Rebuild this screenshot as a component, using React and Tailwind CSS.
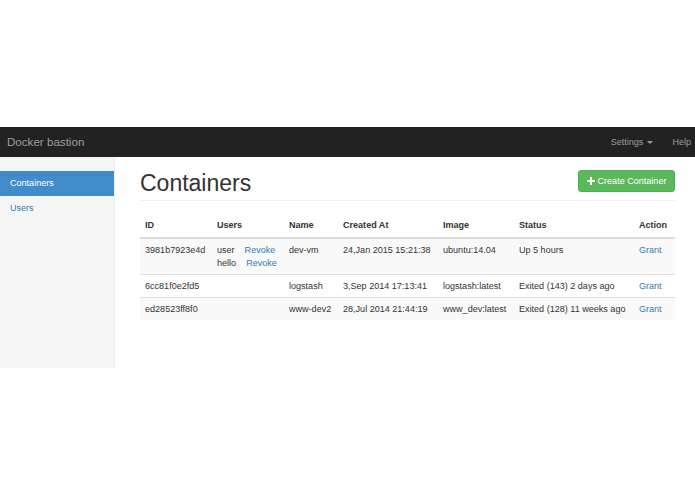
const rows = [
  {
    id: '3981b7923e4d',
    users: [
      { name: 'user', gap: 'ml-[10px]' },
      { name: 'hello', gap: 'ml-[10px]' },
    ],
    name: 'dev-vm',
    created: '24,Jan 2015 15:21:38',
    image: 'ubuntu:14.04',
    status: 'Up 5 hours',
  },
  {
    id: '6cc81f0e2fd5',
    users: [],
    name: 'logstash',
    created: '3,Sep 2014 17:13:41',
    image: 'logstash:latest',
    status: 'Exited (143) 2 days ago',
  },
  {
    id: 'ed28523ff8f0',
    users: [],
    name: 'www-dev2',
    created: '28,Jul 2014 21:44:19',
    image: 'www_dev:latest',
    status: 'Exited (128) 11 weeks ago',
  },
];

const headers = ['ID', 'Users', 'Name', 'Created At', 'Image', 'Status', 'Action'];

export default function App() {
  return (
    <div className="h-[494px] w-[695px] overflow-hidden bg-white pt-[127px] font-['Liberation_Sans',sans-serif] text-[9.05px] leading-[13px] text-[#333]">
      <nav className="flex h-[30px] items-center justify-between bg-[#222] pl-[7px] pr-[4px] text-[#9d9d9d]">
        <span className="mb-[1px] text-[11.6px]">Docker bastion</span>
        <div className="flex items-center">
          <span className="flex items-center gap-[4px]">
            Settings
            <span className="mt-[1px] h-0 w-0 border-x-[3px] border-t-[3px] border-x-transparent border-t-[#9d9d9d]"></span>
          </span>
          <span className="ml-[19px]">Help</span>
        </div>
      </nav>

      <div className="flex h-[211px]">
        <aside className="w-[115px] border-r border-[#eee] bg-[#f5f5f5] pt-[14px]">
          <div className="flex h-[25px] items-center bg-[#428bca] pl-[10px] text-white">Containers</div>
          <div className="flex h-[25px] items-center pl-[10px] text-[#337ab7]">Users</div>
        </aside>

        <main className="ml-[25px] w-[535px]">
          <div className="flex h-[44px] items-start justify-between border-b border-[#eee] pt-[13px]">
            <h1 className="mt-[1px] text-[23px] leading-[24px] text-[#333]">Containers</h1>
            <button className="flex h-[22px] w-[97px] items-center justify-center gap-[3px] rounded-[3px] border border-[#4cae4c] bg-[#5cb85c] text-white">
              <svg width="8" height="8" viewBox="0 0 8 8" fill="#fff">
                <path d="M3 0h2v3h3v2H5v3H3V5H0V3h3z" />
              </svg>
              Create Container
            </button>
          </div>

          <table className="mt-[14px] w-[535px] table-fixed border-collapse text-left">
            <colgroup>
              <col className="w-[72px]" />
              <col className="w-[72px]" />
              <col className="w-[54px]" />
              <col className="w-[100px]" />
              <col className="w-[76px]" />
              <col className="w-[120px]" />
              <col className="w-[41px]" />
            </colgroup>
            <thead>
              <tr className="h-[23px] border-b-2 border-[#ddd]">
                {headers.map((h) => (
                  <th key={h} className="px-[5px] pb-[1px] font-bold">{h}</th>
                ))}
              </tr>
            </thead>
            <tbody>
              {rows.map((row, i) => (
                <tr key={row.id} className={`border-t border-[#ddd] align-top ${i % 2 === 0 ? 'bg-[#f9f9f9]' : ''}`}>
                  <td className="px-[5px] pt-[5px] pb-[4px]">{row.id}</td>
                  <td className="px-[5px] pt-[5px] pb-[4px]">
                    {row.users.map((u) => (
                      <div key={u.name} className="whitespace-nowrap">
                        {u.name}
                        <span className={`${u.gap} text-[#337ab7]`}>Revoke</span>
                      </div>
                    ))}
                  </td>
                  <td className="px-[5px] pt-[5px] pb-[4px]">{row.name}</td>
                  <td className="px-[5px] pt-[5px] pb-[4px] whitespace-nowrap">{row.created}</td>
                  <td className="px-[5px] pt-[5px] pb-[4px] whitespace-nowrap">{row.image}</td>
                  <td className="px-[5px] pt-[5px] pb-[4px] whitespace-nowrap">{row.status}</td>
                  <td className="px-[5px] pt-[5px] pb-[4px] text-[#337ab7]">Grant</td>
                </tr>
              ))}
            </tbody>
          </table>
        </main>
      </div>
    </div>
  );
}
